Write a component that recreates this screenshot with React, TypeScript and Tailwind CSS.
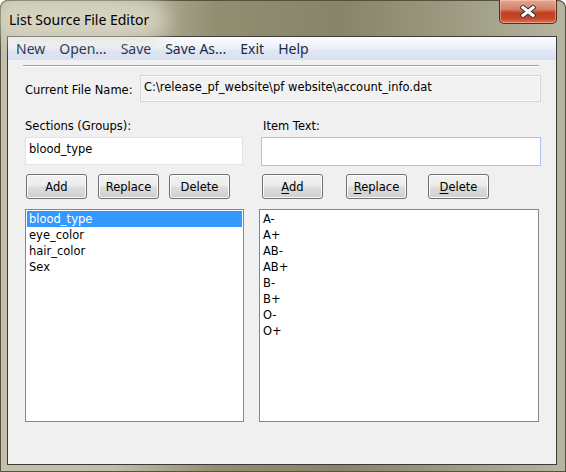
import React from "react";

const ui = "font-['DejaVu_Sans',sans-serif] text-[11.5px] text-black";
const seg = "font-['Noto_Sans','Open_Sans',sans-serif] text-[14px]";

const menuItems = ["New", "Open...", "Save", "Save As...", "Exit", "Help"];
const sections = ["blood_type", "eye_color", "hair_color", "Sex"];
const items = ["A-", "A+", "AB-", "AB+", "B-", "B+", "O-", "O+"];

function Btn({ label, u, className = "" }: { label: string; u?: boolean; className?: string }) {
  return (
    <button
      className={`w-[61px] h-[25px] pt-[2px] rounded-[3px] border border-[#707070] bg-[linear-gradient(to_bottom,#f2f2f2_0%,#ebebeb_48%,#dddddd_52%,#cfcfcf_100%)] shadow-[inset_0_0_0_1px_#fbfbfb] flex items-center justify-center leading-none ${ui} ${className}`}
    >
      {u ? (
        <span>
          <span className="underline underline-offset-2">{label[0]}</span>
          {label.slice(1)}
        </span>
      ) : (
        label
      )}
    </button>
  );
}

function ListBox({ rows, selected, className = "" }: { rows: string[]; selected?: number; className?: string }) {
  return (
    <div className={`h-[213px] mt-[10px] border border-[#828790] bg-white p-[1px] ${className}`}>
      {rows.map((r, i) => (
        <div
          key={r}
          className={`h-[16px] leading-[17px] pl-[2px] ${ui} ${i === selected ? "bg-[#3399ff] text-white" : ""}`}
        >
          {r}
        </div>
      ))}
    </div>
  );
}

export default function App() {
  return (
    <div className="w-[566px] h-[472px] flex flex-col overflow-hidden rounded-t-[8px] bg-[linear-gradient(90deg,#c3c1ac_0%,#c0bea9_20%,#928e71_38%,#88846a_60%,#9c9a80_80%,#b6b5a1_100%)] shadow-[inset_0_0_0_1px_#54523f]">
      {/* title bar */}
      <div className="h-[36px] shrink-0 flex items-start justify-between pl-[9px] pr-[9px]">
        <span className={`relative mt-[10px] leading-[19px] text-black ${seg}`}>
          <span className="absolute -left-[14px] -right-[18px] -top-[10px] -bottom-[9px] rounded-full bg-[#d8d6c4] blur-[10px] opacity-90" />
          <span className="relative">List Source File Editor</span>
        </span>
        <div className="w-[58px] h-[24px] rounded-b-[5px] border border-t-0 border-[#5b2a1e] bg-[linear-gradient(to_bottom,#e6a592_0%,#d6806b_40%,#c3401f_55%,#c8462a_80%,#dc7455_100%)] shadow-[inset_0_0_0_1px_rgba(255,220,200,0.45)] flex items-center justify-center">
          <svg width="18" height="13" viewBox="0 0 18 13">
            <path d="M4 2.5 L14 10.5 M14 2.5 L4 10.5" stroke="#3a3a3a" strokeWidth="5" strokeLinecap="square" />
            <path d="M4 2.5 L14 10.5 M14 2.5 L4 10.5" stroke="#ffffff" strokeWidth="3" strokeLinecap="square" />
          </svg>
        </div>
      </div>

      {/* client area */}
      <div className="ml-[7px] mr-[9px] h-[429px] shrink-0 border border-[#3c3c3c] bg-[#f0f0f0] flex flex-col">
        <div className="h-[23px] shrink-0 flex items-center gap-[14px] pl-[8px] bg-[linear-gradient(to_bottom,#fbfcfe_0%,#eef2f9_45%,#dfe6f4_60%,#d9e2f2_100%)]">
          {menuItems.map((m) => (
            <span key={m} className={`${seg} leading-[18px] text-[#1b2a44]`}>
              {m}
            </span>
          ))}
        </div>

        <div className="mt-[5px] ml-[15px] w-[516px] h-[2px] border-t border-[#a0a0a0] border-b border-b-white" />

        <div className="mt-[8px] pl-[17px] flex items-start">
          <span className={`w-[115px] pt-[8px] leading-[15px] ${ui}`}>Current File Name:</span>
          <div className={`w-[401px] h-[27px] border border-[#d6d6d6] bg-[#f2f2f2] shadow-[inset_0_0_0_1px_#f8f8f8] pl-[3px] pt-[4px] leading-[15px] ${ui}`}>
            C:\release_pf_website\pf website\account_info.dat
          </div>
        </div>

        <div className="mt-[17px] pl-[17px] flex gap-[15px]">
          <div className="w-[219px] flex flex-col">
            <span className={`h-[15px] leading-[15px] ${ui}`}>Sections (Groups):</span>
            <div className={`mt-[3px] w-[218px] h-[28px] border border-[#dfe2e8] bg-white pl-[3px] pt-[4px] leading-[15px] ${ui}`}>
              blood_type
            </div>
            <div className="mt-[9px] ml-[1px] flex">
              <Btn label="Add" />
              <Btn label="Replace" className="ml-[11px]" />
              <Btn label="Delete" className="ml-[10px]" />
            </div>
            <ListBox rows={sections} selected={0} className="w-[219px]" />
          </div>

          <div className="w-[281px] flex flex-col">
            <span className={`h-[15px] leading-[15px] pl-[4px] ${ui}`}>Item Text:</span>
            <div className="mt-[3px] ml-[2px] w-[280px] h-[29px] border border-[#a6c8e8] bg-white" />
            <div className="mt-[8px] ml-[3px] flex">
              <Btn label="Add" u />
              <Btn label="Replace" u className="ml-[23px]" />
              <Btn label="Delete" u className="ml-[21px]" />
            </div>
            <ListBox rows={items} className="w-[280px]" />
          </div>
        </div>
      </div>
    </div>
  );
}
